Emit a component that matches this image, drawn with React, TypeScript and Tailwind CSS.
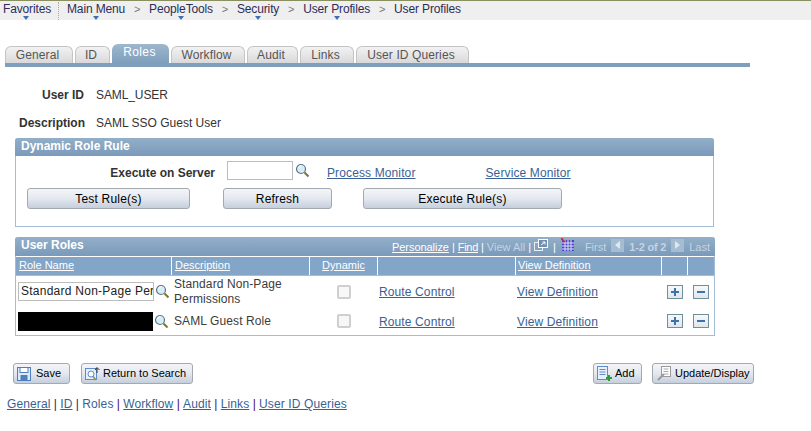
import React from "react";

const crumbs = [
  { label: "Main Menu", caret: true, sep: true },
  { label: "PeopleTools", caret: true, sep: true },
  { label: "Security", caret: true, sep: true },
  { label: "User Profiles", caret: true, sep: true },
  { label: "User Profiles", caret: false, sep: false },
];

const tabs = [
  { label: "General", width: "w-[68px]" },
  { label: "ID", width: "w-[35px]" },
  { label: "Roles", width: "w-[57px]" },
  { label: "Workflow", width: "w-[74px]" },
  { label: "Audit", width: "w-[51px]" },
  { label: "Links", width: "w-[54px]" },
  { label: "User ID Queries", width: "w-[113px]" },
];

const linkCls = "text-[#3a5f94] underline underline-offset-1 tracking-[0.12px]";
const btnCls =
  "flex items-center justify-center h-[21px] rounded-[3px] border border-[#a3a9ae] bg-gradient-to-b from-[#f3f5f8] via-[#e4e8ef] to-[#c5cfdd] text-[12px] tracking-[0.2px] text-black";
const navBtnCls =
  "flex items-center h-[21px] rounded-[3px] border border-[#a3a9ae] bg-gradient-to-b from-[#f3f5f8] via-[#e4e8ef] to-[#c5cfdd] text-[11px] text-black";

function Caret() {
  return <span className="absolute left-1/2 top-[15px] -ml-[3px] w-0 h-0 border-x-[3px] border-x-transparent border-t-[4px] border-t-[#3f6fb0]" />;
}

function Search() {
  return (
    <svg width="15" height="15" viewBox="0 0 15 15" className="shrink-0">
      <circle cx="6" cy="6" r="4.5" fill="#d8ecf6" stroke="#59768c" strokeWidth="1.2" />
      <path d="M3.5 5a3 3 0 0 1 3-2.5" stroke="#ffffff" fill="none" />
      <path d="M9.5 9.5l4 4" stroke="#7d7434" strokeWidth="2" />
    </svg>
  );
}

function Check() {
  return <span className="block w-[14px] h-[14px] rounded-[2px] border-2 border-[#cfcfcf] bg-[#f7f7f7]" />;
}

function PlusMinus({ plus }: { plus: boolean }) {
  return (
    <span className="flex items-center justify-center w-4 h-[14px] border border-[#6f9098] bg-gradient-to-b from-[#f7f9fb] to-[#dfe6ec]">
      <svg width="8" height="8" viewBox="0 0 8 8">
        <path d={plus ? "M0 4h8M4 0v8" : "M0 4h8"} stroke="#3f72ad" strokeWidth="2" />
      </svg>
    </span>
  );
}

function RoleRow({ height, redacted, desc }: { height: string; redacted: boolean; desc: React.ReactNode }) {
  return (
    <div className={`flex items-center ${height}`}>
      <div className="w-[156px] flex items-center pl-[2px] gap-[1px]">
        {redacted ? (
          <div className="w-[135px] h-[19px] bg-black" />
        ) : (
          <div className="w-[136px] h-[19px] border border-[#bdbdbd] pl-[2px] text-[12px] leading-[17px] overflow-hidden whitespace-nowrap tracking-[0.25px] text-[#222]">
            Standard Non-Page Permissions
          </div>
        )}
        <Search />
      </div>
      <div className="w-[138px] pl-[2px] text-[12px] leading-[15px] text-[#3b3b3b] tracking-[0.1px]">{desc}</div>
      <div className="w-[68px] flex justify-center">
        <Check />
      </div>
      <div className="w-[138px] pl-[1px] pt-[1px] text-[12px]">
        <span className={linkCls}>Route Control</span>
      </div>
      <div className="w-[146px] pl-[1px] pt-[1px] text-[12px]">
        <span className={linkCls}>View Definition</span>
      </div>
      <div className="w-[26px] flex justify-center">
        <PlusMinus plus />
      </div>
      <div className="w-[26px] flex justify-center">
        <PlusMinus plus={false} />
      </div>
    </div>
  );
}

export default function App() {
  return (
    <div className="w-[811px] h-[431px] overflow-hidden bg-white text-[12px] font-['Liberation_Sans',Arial,sans-serif]">
      {/* nav bar */}
      <div className="h-5 border-t border-[#8a8f5f] bg-[#efefef] flex items-center text-[12px] text-[#2d2d55] tracking-[-0.14px]">
        <div className="relative ml-[3px] w-[55px] h-full leading-[16px]">
          Favorites
          <span className="absolute left-[20px] top-[15px] w-0 h-0 border-x-[3px] border-x-transparent border-t-[4px] border-t-[#3f6fb0]" />
        </div>
        <div className="h-[18px] border-l border-dotted border-[#aaa] mr-2" />
        {crumbs.map((c, i) => (
          <div key={i} className="flex items-center h-full">
            <span className="relative leading-[16px] h-full">
              {c.label}
              {c.caret && <Caret />}
            </span>
            {c.sep && <span className="w-[24px] text-center text-[11px] text-[#777] leading-[16px] h-full">&gt;</span>}
          </div>
        ))}
      </div>

      {/* tabs */}
      <div className="mt-[24px] ml-[5px] w-[745px]">
        <div className="flex items-end gap-[2px] h-[19px]">
          {tabs.map((t) => (
            <div
              key={t.label}
              className={
                t.label === "Roles"
                  ? `${t.width} h-[19px] pr-[2px] text-center rounded-t-[6px] bg-gradient-to-b from-[#9db7cd] to-[#7f9fbd] text-white text-[12px] leading-[17px] tracking-[0.4px]`
                  : `${t.width} h-[17px] pr-[3px] text-center rounded-t-[6px] border border-b-0 border-[#c4c4c4] bg-gradient-to-b from-[#f2f2f2] to-[#d9d9dc] text-[#555] text-[12px] leading-[16px] tracking-[0.1px]`
              }
            >
              {t.label}
            </div>
          ))}
        </div>
        <div className="h-[4px] bg-[#7f9fbd]" />
      </div>

      {/* fields */}
      <div className="mt-[20px] ml-[19px] flex text-[12px] h-[16px] items-center">
        <div className="w-[65px] text-right font-bold text-[#333]">User ID</div>
        <div className="ml-[12px] text-[#333] tracking-[-0.1px]">SAML_USER</div>
      </div>
      <div className="mt-[12px] ml-[19px] flex text-[12px] h-[16px] items-center">
        <div className="w-[65px] text-right font-bold text-[#333]">Description</div>
        <div className="ml-[12px] text-[#333]">SAML SSO Guest User</div>
      </div>

      {/* dynamic role rule */}
      <div className="mt-[7px] ml-[15px] w-[699px] h-[89px] border border-t-0 border-[#a3bdd6] rounded-t-[3px]">
        <div className="-mx-px h-[18px] rounded-t-[3px] bg-gradient-to-b from-[#93afc8] to-[#7a9abb] pl-[6px] text-white font-bold text-[12px] leading-[16px]">
          Dynamic Role Rule
        </div>
        <div className="flex h-[32px] pt-[5px]">
          <div className="w-[199px] pt-[3px] text-right font-bold text-[#333] text-[12px]">Execute on Server</div>
          <div className="ml-[12px] w-[66px] h-[19px] border border-[#bdbdbd]" />
          <div className="ml-[2px] pt-[2px]">
            <Search />
          </div>
          <span className={`${linkCls} ml-[17px] h-fit pt-[3px]`}>Process Monitor</span>
          <span className={`${linkCls} ml-[70px] h-fit pt-[3px]`}>Service Monitor</span>
        </div>
        <div className="flex">
          <div className={`${btnCls} ml-[11px] w-[163px]`}>Test Rule(s)</div>
          <div className={`${btnCls} ml-[33px] w-[109px]`}>Refresh</div>
          <div className={`${btnCls} ml-[31px] w-[199px]`}>Execute Rule(s)</div>
        </div>
      </div>

      {/* user roles */}
      <div className="mt-[10px] ml-[15px] w-[700px] border border-t-0 border-[#a3bdd6] rounded-t-[3px]">
        <div className="-mx-px h-[19px] rounded-t-[3px] bg-gradient-to-b from-[#93afc8] to-[#7a9abb] flex items-center justify-between text-[11px]">
          <span className="pl-[6px] pb-[3px] text-white font-bold text-[12px]">User Roles</span>
          <div className="flex items-center pr-[5px] pt-[1px] text-[#c3d4e4]">
            <span className="text-white underline tracking-[-0.05px]">Personalize</span>
            <span className="text-white mx-[3px]">|</span>
            <span className="text-white underline tracking-[-0.3px]">Find</span>
            <span className="text-white mx-[3px]">|</span>
            <span>View All</span>
            <span className="text-white mx-[3px]">|</span>
            <svg width="14" height="12" viewBox="0 0 14 12" className="-mt-1">
              <rect x="0.5" y="3.5" width="8" height="8" fill="none" stroke="#e6eef5" />
              <rect x="4.5" y="0.5" width="9" height="8" fill="#6f8fb0" stroke="#ffffff" />
              <path d="M7 6l4-3M8.5 3H11v2.5" stroke="#ffffff" fill="none" />
            </svg>
            <span className="text-white mx-[5px]">|</span>
            <svg width="14" height="14" viewBox="0 0 14 14" className="-mt-1 mr-[10px]">
              <rect x="1" y="2" width="12" height="11" fill="#4646c8" />
              <path d="M1 5h12M1 8h12M1 11h12M4 2v11M7 2v11M10 2v11" stroke="#dfe3f5" />
              <path d="M0 0l4 4M0 0h2M0 0v2" stroke="#d83030" strokeWidth="1.5" />
            </svg>
            <span>First</span>
            <span className="mx-[5px] w-[13px] h-[13px] bg-[#a5bdd3] flex items-center justify-center -mt-1">
              <span className="w-0 h-0 border-y-[4px] border-y-transparent border-r-[5px] border-r-[#dfe8f0]" />
            </span>
            <span className="font-bold tracking-[-0.2px]">1-2 of 2</span>
            <span className="mx-[5px] w-[13px] h-[13px] bg-[#a5bdd3] flex items-center justify-center -mt-1">
              <span className="w-0 h-0 border-y-[4px] border-y-transparent border-l-[5px] border-l-[#dfe8f0]" />
            </span>
            <span>Last</span>
          </div>
        </div>
        <div className="flex h-[19px] mt-px gap-px text-white text-[11px] leading-[17px] border-b border-[#a3bdd6] bg-white">
          <div className="w-[155px] bg-[#83a5c7] pl-[3px] underline">Role Name</div>
          <div className="w-[137px] bg-[#83a5c7] pl-[3px] underline">Description</div>
          <div className="w-[67px] bg-[#83a5c7] text-center underline">Dynamic</div>
          <div className="w-[137px] bg-[#83a5c7]" />
          <div className="w-[145px] bg-[#83a5c7] pl-[2px] underline">View Definition</div>
          <div className="w-[25px] bg-[#83a5c7]" />
          <div className="w-[26px] bg-[#83a5c7]" />
        </div>
        <RoleRow height="h-[31px]" redacted={false} desc={<>Standard Non-Page<br />Permissions</>} />
        <RoleRow height="h-[28px]" redacted desc="SAML Guest Role" />
      </div>

      {/* actions */}
      <div className="mt-[27px] flex w-[741px] ml-[13px] justify-between">
        <div className="flex gap-[11px]">
          <div className={`${navBtnCls} w-[57px] pl-[3px] gap-[5px]`}>
            <svg width="14" height="14" viewBox="0 0 14 14">
              <rect x="0.5" y="0.5" width="13" height="13" fill="#dfe9f8" stroke="#4f7fc0" />
              <rect x="3" y="0.5" width="8" height="5" fill="#fff" stroke="#4f7fc0" />
              <rect x="3.5" y="8" width="7" height="5.5" fill="#4f7fc0" />
            </svg>
            Save
          </div>
          <div className={`${navBtnCls} w-[112px] pl-[3px] gap-[2px]`}>
            <svg width="16" height="15" viewBox="0 0 16 15">
              <rect x="0.5" y="2.5" width="11" height="11" fill="#e6eefa" stroke="#5f8ccb" />
              <circle cx="6" cy="8" r="3" fill="#fff" stroke="#5f8ccb" />
              <path d="M8 10.5l3 3.5" stroke="#9a8d36" strokeWidth="1.5" />
              <path d="M12 7V2M10 4l2-2.5L14.5 4" stroke="#333" fill="none" />
            </svg>
            Return to Search
          </div>
        </div>
        <div className="flex gap-[10px]">
          <div className={`${navBtnCls} w-[49px] pl-[3px] gap-[2px]`}>
            <svg width="16" height="15" viewBox="0 0 16 15">
              <rect x="0.5" y="0.5" width="10" height="13" fill="#e8f0fb" stroke="#5f8ccb" />
              <path d="M2.5 3.5h6M2.5 6h6M2.5 8.5h6" stroke="#5f8ccb" />
              <path d="M9 12h6M12 9v6" stroke="#2f9a3c" strokeWidth="2" />
            </svg>
            Add
          </div>
          <div className={`${navBtnCls} w-[102px] pl-[4px] gap-[3px]`}>
            <svg width="15" height="15" viewBox="0 0 15 15">
              <rect x="4.5" y="0.5" width="9" height="10" fill="#fff" stroke="#9a9a9a" />
              <path d="M6.5 3h5M6.5 5.5h5M6.5 8h5" stroke="#aaa" />
              <path d="M1 14l6-6" stroke="#9a9a9a" strokeWidth="2" />
            </svg>
            Update/Display
          </div>
        </div>
      </div>

      {/* bottom links */}
      <div className="mt-[11px] ml-[7px] flex text-[12px] text-[#4b0a6b] gap-[3.3px]">
        <span className={linkCls}>General</span>
        <span>|</span>
        <span className={linkCls}>ID</span>
        <span>|</span>
        <span className="text-[#3a5f94] tracking-[0.12px]">Roles</span>
        <span>|</span>
        <span className={linkCls}>Workflow</span>
        <span>|</span>
        <span className={linkCls}>Audit</span>
        <span>|</span>
        <span className={linkCls}>Links</span>
        <span>|</span>
        <span className={linkCls}>User ID Queries</span>
      </div>
    </div>
  );
}
